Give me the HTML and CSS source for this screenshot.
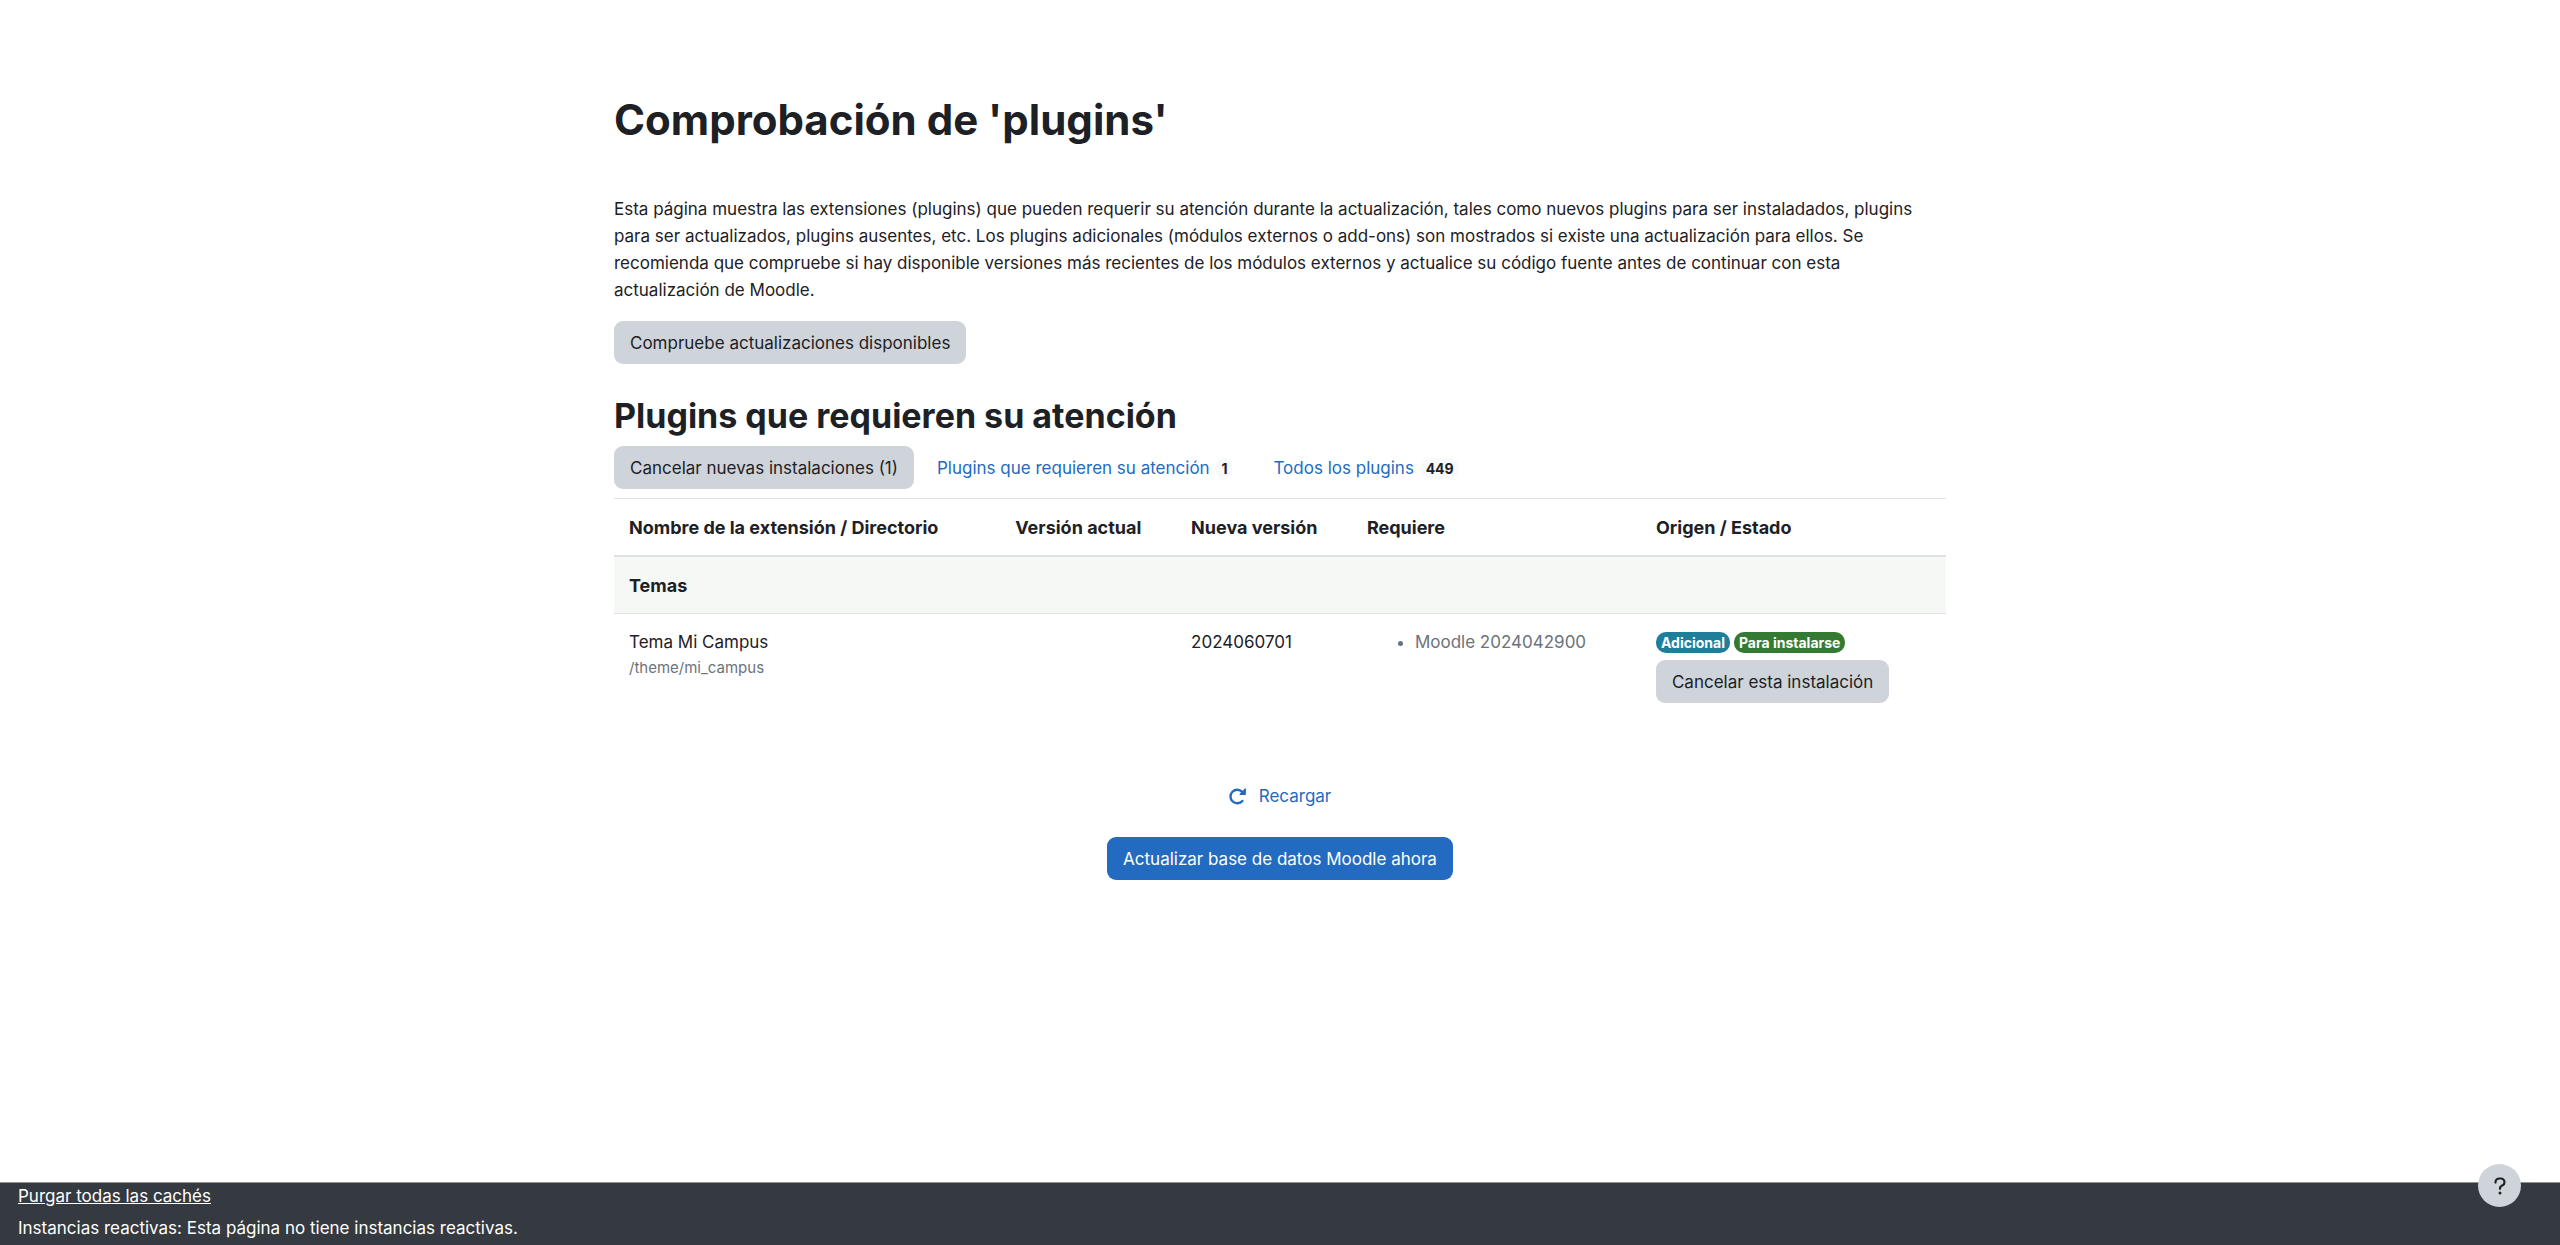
FILE: index.html
```html
<!DOCTYPE html>
<html lang="es">
<head>
<meta charset="utf-8">
<meta name="viewport" content="width=device-width, initial-scale=1">
<title>Comprobación de 'plugins'</title>
<link rel="stylesheet" href="styles.css">
</head>
<body>
<main class="page">
  <h1 class="page-title">Comprobación de 'plugins'</h1>
  <p class="intro">Esta página muestra las extensiones (plugins) que pueden requerir su atención durante la actualización, tales como nuevos plugins para ser instaladados, plugins para ser actualizados, plugins ausentes, etc. Los plugins adicionales (módulos externos o add-ons) son mostrados si existe una actualización para ellos. Se recomienda que compruebe si hay disponible versiones más recientes de los módulos externos y actualice su código fuente antes de continuar con esta actualización de Moodle.</p>
  <button class="btn btn-secondary" type="button">Compruebe actualizaciones disponibles</button>

  <h2 class="section-title">Plugins que requieren su atención</h2>
  <div class="toolbar">
    <button class="btn btn-secondary" type="button">Cancelar nuevas instalaciones (1)</button>
    <a class="filter" href="#atencion">Plugins que requieren su atención <span class="badge badge-light">1</span></a>
    <a class="filter" href="#todos">Todos los plugins <span class="badge badge-light">449</span></a>
  </div>

  <table class="plugins">
    <colgroup>
      <col class="col-name"><col class="col-version"><col class="col-version"><col class="col-requires"><col class="col-status">
    </colgroup>
    <thead>
      <tr>
        <th scope="col">Nombre de la extensión / Directorio</th>
        <th scope="col">Versión actual</th>
        <th scope="col">Nueva versión</th>
        <th scope="col">Requiere</th>
        <th scope="col">Origen / Estado</th>
      </tr>
    </thead>
    <tbody>
      <tr class="group">
        <th scope="colgroup" colspan="5">Temas</th>
      </tr>
      <tr>
        <td>
          <div>Tema Mi Campus</div>
          <div class="directory">/theme/mi_campus</div>
        </td>
        <td></td>
        <td>2024060701</td>
        <td><ul class="requires"><li>Moodle 2024042900</li></ul></td>
        <td>
          <div class="badges">
            <span class="badge badge-info">Adicional</span>
            <span class="badge badge-success">Para instalarse</span>
          </div>
          <button class="btn btn-secondary" type="button">Cancelar esta instalación</button>
        </td>
      </tr>
    </tbody>
  </table>

  <div class="actions">
    <a class="reload" href="#recargar">
      <svg class="reload-icon" viewBox="0 0 17 17" aria-hidden="true">
        <path d="M13.4 13A6.800 6.800 0 1 1 13.200 3.800" fill="none" stroke="currentColor" stroke-width="2.400" stroke-linecap="round"/>
        <path d="M16.900 1v5.200a0.700 0.700 0 0 1-0.700 0.700h-5.200a0.600 0.600 0 0 1-0.400-1L15.800 0.600a0.600 0.600 0 0 1 1.100 0.400z" fill="currentColor"/>
      </svg>
      Recargar</a>
    <button class="btn btn-primary" type="submit">Actualizar base de datos Moodle ahora</button>
  </div>
</main>

<footer class="footer">
  <button class="help" type="button" aria-label="Ayuda">
    <svg class="help-icon" viewBox="0 0 12 18" aria-hidden="true">
      <path d="M1.5 5.6V5.2C1.5 3 3.2 1.5 5.3 1.5h1.4c2.1 0 3.8 1.6 3.8 3.7 0 1.4-.7 2.4-1.9 3.1L7.2 9.1C6.4 9.6 6 10.2 6 11.1v.7" fill="none" stroke="currentColor" stroke-width="2.2" stroke-linecap="round"/>
      <circle cx="6" cy="16" r="1.5" fill="currentColor"/>
    </svg>
  </button>
  <a class="footer-link" href="#cache">Purgar todas las cachés</a>
  <div>Instancias reactivas: Esta página no tiene instancias reactivas.</div>
</footer>
</body>
</html>
```
FILE: styles.css
```css
* {
  box-sizing: border-box;
}

body {
  display: flex;
  flex-direction: column;
  min-height: 100vh;
  margin: 0;
  background: #fff;
  color: #1d2125;
  font-family: Inter, "Liberation Sans", sans-serif;
  font-size: 17px;
  line-height: 27px;
}

.page {
  flex: 1;
  width: 100%;
  max-width: 1364px;
  margin: 0 auto;
  padding: 92px 16px 48px;
}

.page-title {
  margin: 0 0 48px;
  font-size: 42px;
  line-height: 56px;
  font-weight: 700;
}

.intro {
  margin: 0 0 17px;
}

.btn {
  padding: 8px 15px 6px;
  border: 1px solid transparent;
  border-radius: 9px;
  font: inherit;
  line-height: 27px;
  cursor: pointer;
}

.btn-secondary {
  background: #ced4da;
  color: #1d2125;
}

.btn-primary {
  background: #236bc0;
  color: #fff;
}

.section-title {
  margin: 30px 0 9px;
  font-size: 34px;
  line-height: 43px;
  font-weight: 700;
}

.toolbar {
  display: flex;
  flex-wrap: wrap;
  align-items: center;
  margin-bottom: 9px;
}

.filter {
  padding: 2px 18px 0 23px;
  color: #236bc0;
  text-decoration: none;
}

.badge {
  display: inline-block;
  padding: 0 5px;
  border-radius: 10px;
  font-size: 14px;
  line-height: 21px;
  font-weight: 700;
}

.badge-light {
  margin-left: 2px;
  background: #f8f9fa;
  color: #1d2125;
}

.badge-info {
  background: #1f7e9a;
  color: #fff;
}

.badge-success {
  background: #357a32;
  color: #fff;
}

.plugins {
  width: 100%;
  table-layout: fixed;
  border-collapse: collapse;
}

.plugins th,
.plugins td {
  padding: 15px 15px 14px;
  border-top: 1px solid #dee2e6;
  text-align: left;
  vertical-align: top;
}

.plugins th {
  font-size: 18px;
}

.plugins thead th {
  border-bottom: 2px solid #dee2e6;
}

.plugins .group th {
  background: #f6f8f6;
}

.col-name {
  width: 29%;
}

.col-version {
  width: 13.2%;
}

.col-requires {
  width: 21.7%;
}

.directory,
.requires {
  color: #6a737b;
}

.directory {
  font-size: 15px;
  line-height: 24px;
}

.requires {
  margin: 0;
  padding-left: 48px;
}

.badges {
  display: flex;
  gap: 4px;
  margin: 3px 0 7px;
}

.actions {
  display: flex;
  flex-direction: column;
  align-items: center;
  gap: 27px;
  margin-top: 66px;
}

.reload {
  display: flex;
  align-items: center;
  gap: 13px;
  color: #236bc0;
  text-decoration: none;
}

.reload-icon {
  width: 17px;
  height: 17px;
}

.footer {
  position: relative;
  padding: 0 18px 3px;
  border-top: 1px solid #8e9296;
  background: #343a40;
  color: #fff;
}

.footer-link {
  display: inline-block;
  margin-bottom: 5px;
  color: #fff;
}

.help {
  position: absolute;
  top: -19px;
  right: 39px;
  display: flex;
  align-items: center;
  justify-content: center;
  width: 43px;
  height: 43px;
  padding: 0;
  border: 0;
  border-radius: 50%;
  background: #ced4da;
  color: #1d2125;
  cursor: pointer;
}

.help-icon {
  width: 12px;
  height: 18px;
}
```
